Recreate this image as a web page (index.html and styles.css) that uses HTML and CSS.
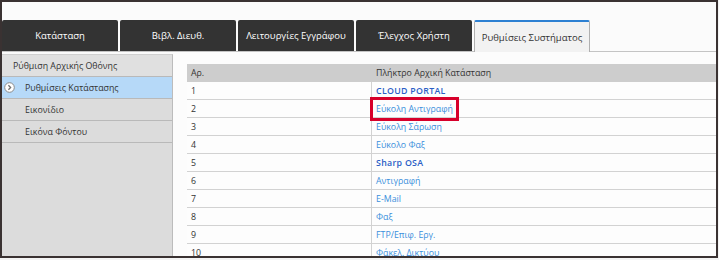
FILE: index.html
```html
<!DOCTYPE html>
<html>
<head>
<meta charset="utf-8">
<link rel="stylesheet" href="styles.css">
</head>
<body>
<div class="frame">
  <div class="topstrip"></div>
  <div class="tabs">
    <div class="tab">Κατάσταση</div>
    <div class="tab">Βιβλ. Διευθ.</div>
    <div class="tab">Λειτουργίες Εγγράφου</div>
    <div class="tab">Έλεγχος Χρήστη</div>
    <div class="tab active">Ρυθμίσεις Συστήματος</div>
  </div>
  <div class="main">
    <div class="sidebar">
      <div class="side-item head">Ρύθμιση Αρχικής Οθόνης</div>
      <div class="side-item selected">
        <svg class="arrow" width="11" height="11" viewBox="0 0 11 11"><circle cx="5.5" cy="5.5" r="4.8" fill="#fff" stroke="#8a8a8a" stroke-width="1"/><path d="M4.4 3.3 L6.6 5.5 L4.4 7.7" fill="none" stroke="#707070" stroke-width="1.3"/></svg>
        Ρυθμίσεις Κατάστασης</div>
      <div class="side-item">Εικονίδιο</div>
      <div class="side-item">Εικόνα Φόντου</div>
    </div>
    <div class="content">
      <table class="grid">
        <thead>
          <tr><th class="c1">Αρ.</th><th>Πλήκτρο Αρχική Κατάσταση</th></tr>
        </thead>
        <tbody>
          <tr><td>1</td><td><span class="link strong">CLOUD PORTAL</span></td></tr>
          <tr><td>2</td><td><span class="link hl">Εύκολη Αντιγραφή</span></td></tr>
          <tr><td>3</td><td><span class="link">Εύκολη Σάρωση</span></td></tr>
          <tr><td>4</td><td><span class="link">Εύκολο Φαξ</span></td></tr>
          <tr><td>5</td><td><span class="link strong">Sharp OSA</span></td></tr>
          <tr><td>6</td><td><span class="link">Αντιγραφή</span></td></tr>
          <tr><td>7</td><td><span class="link">E-Mail</span></td></tr>
          <tr><td>8</td><td><span class="link">Φαξ</span></td></tr>
          <tr><td>9</td><td><span class="link">FTP/Επιφ. Εργ.</span></td></tr>
          <tr><td>10</td><td><span class="link">Φάκελ. Δικτύου</span></td></tr>
        </tbody>
      </table>
    </div>
  </div>
</div>
</body>
</html>
```
FILE: styles.css
```css
html, body {
  margin: 0;
  padding: 0;
  background: #f4f4f4;
}
body {
  font-family: "Open Sans", "Noto Sans", sans-serif;
  font-size: 10px;
  color: #333;
}
.frame {
  box-sizing: border-box;
  width: 718px;
  height: 258px;
  border: 2px solid #3a3232;
  background: #fbfbfb;
  overflow: hidden;
  display: flex;
  flex-direction: column;
}
.topstrip {
  height: 18px;
  flex: none;
}
.tabs {
  height: 31px;
  flex: none;
  display: flex;
  gap: 2px;
  border-bottom: 1px solid #c4c4c4;
  position: relative;
}
.tab {
  width: 116px;
  box-sizing: border-box;
  background: #333333;
  color: #fff;
  display: flex;
  align-items: center;
  justify-content: center;
  border-radius: 2px 2px 0 0;
  font-size: 9.5px;
}
.tab.active {
  background: #f2f2f2;
  color: #333;
  border: 1px solid #b0b0b0;
  border-top: 2px solid #2d80d2;
  border-bottom: none;
  height: 32px;
  position: relative;
  z-index: 1;
}
.main {
  flex: 1;
  display: flex;
  min-height: 0;
}
.sidebar {
  width: 171px;
  flex: none;
  box-sizing: border-box;
  background: #dcdcdc;
  border-right: 1px solid #bcbcbc;
  margin-top: 2px;
  border-top: 1px solid #d0d0d0;
}
.side-item {
  height: 21px;
  border-bottom: 1px solid #b9b9b9;
  display: flex;
  align-items: center;
  padding-left: 23px;
  font-size: 8.8px;
  color: #333;
  position: relative;
}
.side-item.head {
  padding-left: 11px;
  background: #e0e0e0;
}
.side-item.selected {
  background: #b6d9f8;
}
.arrow {
  position: absolute;
  left: 2px;
  top: 5px;
}
.content {
  flex: 1;
  padding: 12px 0 0 14px;
  background: #fcfcfc;
}
.grid {
  width: 100%;
  border-collapse: collapse;
  font-size: 8.8px;
}
.grid th {
  background: #cdcdcd;
  font-weight: normal;
  text-align: left;
  height: 18px;
  padding: 0 4px;
  color: #333;
}
.grid th.c1 {
  width: 176px;
  border-right: 1px solid #cdcdcd;
}
.grid td {
  height: 17px;
  padding: 0 4px;
  border-bottom: 1px solid #d2d2d2;
  background: #fdfdfd;
}
.grid td:first-child {
  border-right: 1px solid #d2d2d2;
}
.link {
  color: #3a8fdc;
}
.link.strong {
  color: #2a5ec6;
  font-weight: 600;
  letter-spacing: 0.3px;
}
.link.hl {
  outline: 3px solid #d7002b;
  outline-offset: 2px;
  outline-offset: 3px;
}
```
